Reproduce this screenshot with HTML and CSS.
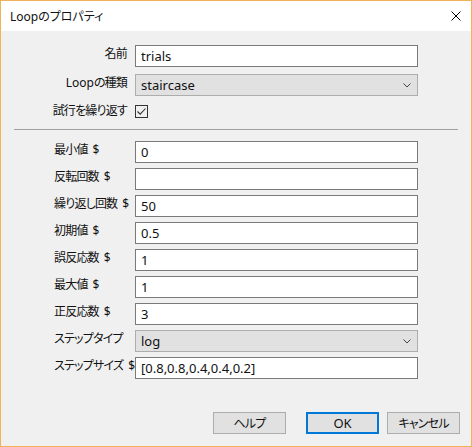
FILE: index.html
```html
<!DOCTYPE html>
<html lang="ja">
<head>
<meta charset="utf-8">
<title>Loopのプロパティ</title>
<link rel="stylesheet" href="styles.css">
</head>
<body>
<div class="window">
  <div class="titlebar">
    <span class="title">Loopのプロパティ</span>
    <svg class="close" width="10" height="10" viewBox="0 0 10 10"><path d="M0.5 0.5 L9.5 9.5 M9.5 0.5 L0.5 9.5" stroke="#000" stroke-width="1" fill="none"/></svg>
  </div>
  <div class="content">
    <div class="group1">
      <div class="label r">名前</div>
      <div class="input">trials</div>
      <div class="label r"><span class="lat">Loop</span>の種類</div>
      <div class="select"><span>staircase</span><svg class="chev" width="8" height="5" viewBox="0 0 8 5"><path d="M0.5 0.5 L4 4 L7.5 0.5" stroke="#444" stroke-width="1" fill="none"/></svg></div>
      <div class="label r chk">試行を繰り返す</div>
      <div class="checkrow"><div class="checkbox"><svg width="11" height="11" viewBox="0 0 11 11"><path d="M1.5 5.5 L4.2 8.2 L9.5 2.5" stroke="#333" stroke-width="1.1" fill="none"/></svg></div></div>
    </div>
    <div class="sep"></div>
    <div class="group2">
      <div class="label">最小値<span class="d">$</span></div>
      <div class="input">0</div>
      <div class="label">反転回数<span class="d">$</span></div>
      <div class="input"></div>
      <div class="label">繰り返し回数<span class="d">$</span></div>
      <div class="input">50</div>
      <div class="label">初期値<span class="d">$</span></div>
      <div class="input">0.5</div>
      <div class="label">誤反応数<span class="d">$</span></div>
      <div class="input">1</div>
      <div class="label">最大値<span class="d">$</span></div>
      <div class="input">1</div>
      <div class="label">正反応数<span class="d">$</span></div>
      <div class="input">3</div>
      <div class="label">ステップタイプ</div>
      <div class="select"><span>log</span><svg class="chev" width="8" height="5" viewBox="0 0 8 5"><path d="M0.5 0.5 L4 4 L7.5 0.5" stroke="#444" stroke-width="1" fill="none"/></svg></div>
      <div class="label">ステップサイズ<span class="d">$</span></div>
      <div class="input">[0.8,0.8,0.4,0.4,0.2]</div>
    </div>
    <div class="buttons">
      <div class="btn help">ヘルプ</div>
      <div class="btn ok">OK</div>
      <div class="btn">キャンセル</div>
    </div>
  </div>
</div>
</body>
</html>
```
FILE: styles.css
```css
* { box-sizing: border-box; }
html, body { margin: 0; padding: 0; }
body {
  font-family: "Noto Sans", "Noto Sans CJK JP", sans-serif;
  font-size: 12px;
  color: #111;
  background: #f0f0f0;
  font-feature-settings: "palt";
}
.window {
  width: 472px;
  height: 447px;
  border: 1px solid #f0b35a;
  display: flex;
  flex-direction: column;
  background: #f0f0f0;
}
.titlebar {
  height: 30px;
  background: #fff;
  display: flex;
  align-items: center;
  justify-content: space-between;
  padding: 0 10px 0 9px;
  flex-shrink: 0;
}
.title { font-size: 12px; }
.content {
  flex: 1;
  display: flex;
  flex-direction: column;
  padding-top: 14px;
}
.group1 {
  display: grid;
  grid-template-columns: 126px 283px;
  column-gap: 8px;
  row-gap: 7px;
}
.group2 {
  display: grid;
  grid-template-columns: 81px 283px;
  column-gap: 0;
  row-gap: 5px;
  padding-left: 53px;
}
.label {
  font-size: 12px;
  letter-spacing: -0.8px;
  line-height: 16px;
  padding-top: 1px;
  white-space: nowrap;
}
.label .lat { letter-spacing: 0; }
.label .d { margin-left: 5px; letter-spacing: 0; }
.label.r { text-align: right; }
.label.chk { padding-top: 0; align-self: center; }
.input {
  height: 22px;
  border: 1px solid #7a7a7a;
  background: #fff;
  padding-left: 5px;
  display: flex;
  align-items: center;
  font-size: 13px;
}
.select {
  height: 22px;
  border: 1px solid #adadad;
  background: #e1e1e1;
  padding-left: 5px;
  padding-right: 6px;
  display: flex;
  align-items: center;
  justify-content: space-between;
  font-size: 13px;
}
.checkrow {
  height: 14px;
  margin-top: 1px;
  display: flex;
  align-items: center;
}
.checkbox {
  width: 13px;
  height: 13px;
  border: 1px solid #333;
  display: flex;
  align-items: center;
  justify-content: center;
}
.checkbox svg { display: block; }
.sep {
  border-top: 1px solid #a0a0a0;
  margin: 10px 13px 11px 13px;
}
.buttons {
  margin-top: auto;
  display: flex;
  justify-content: flex-end;
  padding: 0 11px 12px 0;
}
.btn {
  width: 73px;
  height: 22px;
  border: 1px solid #adadad;
  background: #e1e1e1;
  display: flex;
  align-items: center;
  justify-content: center;
  margin-left: 8px;
  font-size: 12px;
  letter-spacing: -0.8px;
}
.btn.help { margin-right: 12px; }
.btn.ok {
  border: 2px solid #0078d7;
  font-size: 13px;
  letter-spacing: 0;
}
```
